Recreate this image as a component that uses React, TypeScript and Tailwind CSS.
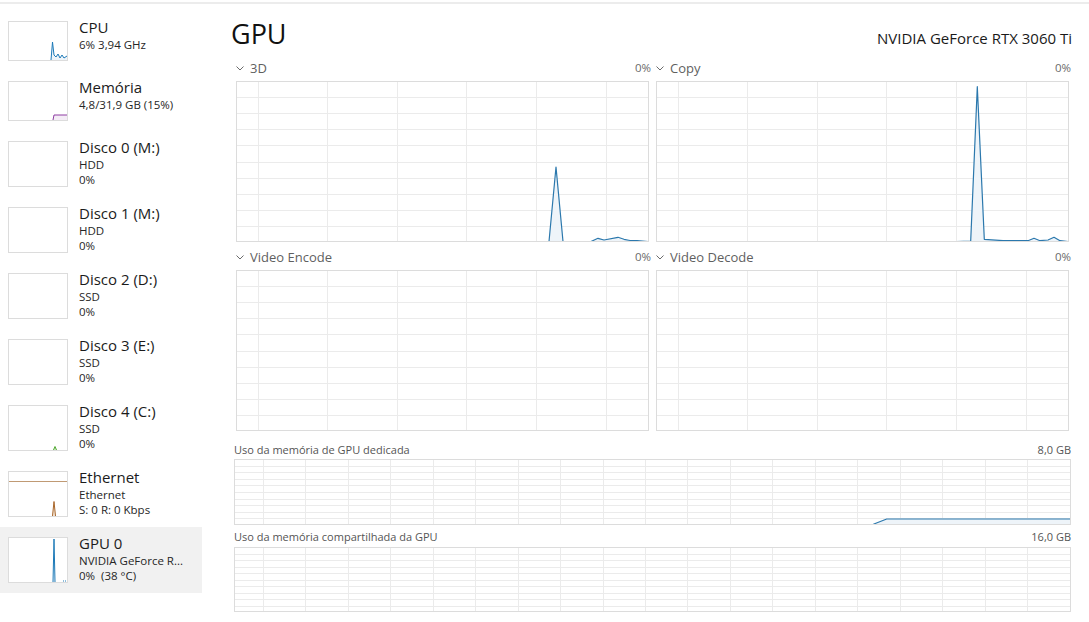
const BLUE = "#2b78ad";
const BLUE_FILL = "#eef4f9";
const GRID = "#ebebeb";
const EDGE = "#dcdcdc";

type Pt = [number, number];

function Thumb({ h, line, color, fill, extra }: { h: number; line?: Pt[]; color?: string; fill?: string; extra?: React.ReactNode }) {
  const pts = line ? line.map((p) => p.join(",")).join(" ") : "";
  return (
    <svg width={60} height={h} className="shrink-0 block">
      <rect x={0} y={0} width={60} height={h} fill="#fff" />
      {line && fill && <polygon points={`${line[0][0]},${h} ${pts} ${line[line.length - 1][0]},${h}`} fill={fill} />}
      {extra}
      {line && <polyline points={pts} fill="none" stroke={color} strokeWidth={1} />}
      <rect x={0.5} y={0.5} width={59} height={h - 1} fill="none" stroke={EDGE} />
    </svg>
  );
}

function Chart({ w, h, offset, step, line }: { w: number; h: number; offset: number; step: number; line?: Pt[] }) {
  const xs: number[] = [];
  for (let x = offset; x < w - 1; x += step) xs.push(Math.round(x) + 0.5);
  const ys: number[] = [];
  for (let i = 1; i < 10; i++) ys.push(Math.round((i * h) / 10) + 0.5);
  const pts = line ? line.map((p) => p.join(",")).join(" ") : "";
  return (
    <svg width={w} height={h} className="block">
      {xs.map((x) => (
        <line key={"x" + x} x1={x} y1={0} x2={x} y2={h} stroke={GRID} />
      ))}
      {ys.map((y) => (
        <line key={"y" + y} x1={0} y1={y} x2={w} y2={y} stroke={GRID} />
      ))}
      {line && <polygon points={`${line[0][0]},${h} ${pts} ${line[line.length - 1][0]},${h}`} fill={BLUE_FILL} />}
      {line && <polyline points={pts} fill="none" stroke={BLUE} strokeWidth={1.2} strokeLinejoin="round" />}
      <rect x={0.5} y={0.5} width={w - 1} height={h - 1} fill="none" stroke={EDGE} />
    </svg>
  );
}

function Chevron() {
  return (
    <svg width={8} height={5} className="block">
      <path d="M0.5 0.5 L4 4 L7.5 0.5" fill="none" stroke="#6b6b6b" strokeWidth={1} />
    </svg>
  );
}

const side = [
  {
    title: "CPU",
    lines: ["6% 3,94 GHz"],
    h: 40,
    thumb: <Thumb h={40} color="#1d7ab8" fill={BLUE_FILL} line={[[43, 39], [44.5, 21], [46, 34], [48, 36], [50, 33], [52, 37], [54, 34], [56, 37], [59, 35]]} />,
  },
  {
    title: "Memória",
    lines: ["4,8/31,9 GB (15%)"],
    h: 40,
    thumb: <Thumb h={40} color="#8e3da2" fill="#f4ecf6" line={[[45, 39], [46, 34], [59, 34]]} />,
  },
  { title: "Disco 0 (M:)", lines: ["HDD", "0%"], h: 46, thumb: <Thumb h={46} /> },
  { title: "Disco 1 (M:)", lines: ["HDD", "0%"], h: 46, thumb: <Thumb h={46} /> },
  { title: "Disco 2 (D:)", lines: ["SSD", "0%"], h: 46, thumb: <Thumb h={46} /> },
  { title: "Disco 3 (E:)", lines: ["SSD", "0%"], h: 46, thumb: <Thumb h={46} /> },
  {
    title: "Disco 4 (C:)",
    lines: ["SSD", "0%"],
    h: 46,
    thumb: <Thumb h={46} color="#4ea72e" fill="#dcefd4" line={[[45.5, 45], [47, 41.5], [48.5, 45]]} />,
  },
  {
    title: "Ethernet",
    lines: ["Ethernet", "S: 0 R: 0 Kbps"],
    h: 46,
    thumb: (
      <Thumb
        h={46}
        color="#a8662a"
        fill="#f3e6d9"
        line={[[44.5, 45], [46, 30.5], [47.5, 45]]}
        extra={<line x1={0} y1={10.5} x2={60} y2={10.5} stroke="#c09a74" />}
      />
    ),
  },
  {
    title: "GPU 0",
    lines: ["NVIDIA GeForce R...", "0%  (38 °C)"],
    h: 46,
    sel: true,
    thumb: (
      <Thumb
        h={46}
        color="#1d7ab8"
        fill={BLUE_FILL}
        line={[[45, 45], [46, 2], [47, 45]]}
        extra={<line x1={55} y1={44} x2={59} y2={44} stroke="#1d7ab8" strokeDasharray="1 1" />}
      />
    ),
  },
];

const top3d: Pt[] = [
  [300, 160.5], [313, 160.5], [320, 86], [327, 160.5], [355, 160.5], [362, 157.3], [368, 159], [382, 156.3], [388, 158.3], [394, 159.5], [401, 159.5], [412, 160.5],
];
const topCopy: Pt[] = [
  [300, 160.5], [314.7, 160], [321.3, 5.7], [328.3, 158.3], [347, 159.7], [372, 159.7], [378, 157.3], [384, 159.7], [392, 159], [398, 156.3], [404, 159.7], [412, 160.5],
];
const dedicated: Pt[] = [
  [600, 66], [639.3, 65.3], [652.7, 60], [836, 60],
];

function Section({ label, line }: { label: string; line?: Pt[] }) {
  return (
    <div>
      <div className="flex items-center justify-between h-[16px] -mr-[2px]">
        <div className="flex items-center gap-[6px] text-[13px] leading-[16px] text-[#5f5f5f]">
          <Chevron />
          <span>{label}</span>
        </div>
        <span className="text-[11.5px] leading-[16px] text-[#6a6a6a]">0%</span>
      </div>
      <div className="mt-[5px]">
        <Chart w={413} h={161} offset={21.5} step={69.6} line={line} />
      </div>
    </div>
  );
}

export default function App() {
  return (
    <div className="w-[1089px] h-[622px] bg-white overflow-hidden pt-[2px]" style={{ fontFamily: '"Open Sans", "Noto Sans", sans-serif' }}>
      <div className="h-[2px] bg-[#ececec]" />
      <div className="flex">
        <aside className="w-[202px] shrink-0 pt-[7px]">
          {side.map((s) => (
            <div key={s.title} className={`flex gap-[11px] px-2 py-[10px] ${s.sel ? "bg-[#f1f1f1]" : ""}`}>
              {s.thumb}
              <div className="-mt-[3px] min-w-0" style={{ height: s.h }}>
                <div className="text-[15px] leading-[19px] text-[#1b1b1b]">{s.title}</div>
                {s.lines.map((l, i) => (
                  <div key={i} className="text-[11.5px] leading-[15px] text-[#262626] whitespace-pre">
                    {l}
                  </div>
                ))}
              </div>
            </div>
          ))}
        </aside>

        <main className="flex-1 pl-[32px] pr-[18px]">
          <div className="mt-[16px] flex items-baseline justify-between h-[28px]">
            <h1 className="text-[27px] leading-[28px] text-[#111] -ml-[3px]">GPU</h1>
            <span className="text-[15px] text-[#1a1a1a] -mr-[1px]">NVIDIA GeForce RTX 3060 Ti</span>
          </div>

          <div className="mt-[12px] px-[2px] grid grid-cols-2 gap-x-[7px] gap-y-[7px]">
            <Section label="3D" line={top3d} />
            <Section label="Copy" line={topCopy} />
            <Section label="Video Encode" />
            <Section label="Video Decode" />
          </div>

          <div className="mt-[12px] flex justify-between text-[11px] leading-[14px] text-[#555]">
            <span>Uso da memória de GPU dedicada</span>
            <span>8,0 GB</span>
          </div>
          <div className="mt-[2px]">
            <Chart w={837} h={66} offset={29} step={42.45} line={dedicated} />
          </div>

          <div className="mt-[5px] flex justify-between text-[11px] leading-[14px] text-[#555]">
            <span>Uso da memória compartilhada da GPU</span>
            <span>16,0 GB</span>
          </div>
          <div className="mt-[3px]">
            <Chart w={837} h={65} offset={29} step={42.45} />
          </div>
        </main>
      </div>
    </div>
  );
}
